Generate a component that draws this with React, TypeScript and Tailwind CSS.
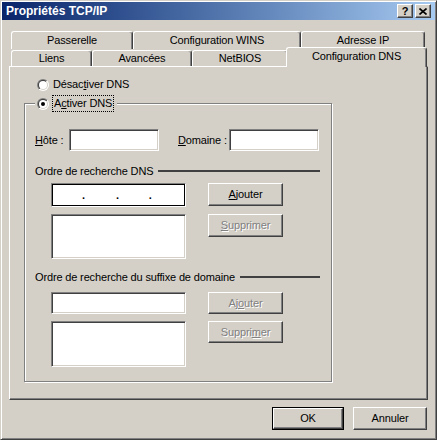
import { useId } from 'react'

const raised =
  'border border-t-white border-l-white border-r-[#404040] border-b-[#404040] shadow-[inset_-1px_-1px_0_#808080] bg-[#d4d0c8]'
const sunken =
  'border border-t-[#808080] border-l-[#808080] border-r-white border-b-white shadow-[inset_1px_1px_0_#404040,inset_-1px_-1px_0_#d4d0c8] bg-white'

function Radio({ checked }: { checked?: boolean }) {
  const id = useId().replace(/:/g, '')
  return (
    <svg width="12" height="12" viewBox="0 0 12 12" className="shrink-0">
      <defs>
        <linearGradient id={`o${id}`} x1="0" y1="0" x2="1" y2="1">
          <stop offset="0.5" stopColor="#808080" />
          <stop offset="0.5" stopColor="#ffffff" />
        </linearGradient>
        <linearGradient id={`i${id}`} x1="0" y1="0" x2="1" y2="1">
          <stop offset="0.5" stopColor="#404040" />
          <stop offset="0.5" stopColor="#d4d0c8" />
        </linearGradient>
      </defs>
      <circle cx="6" cy="6" r="6" fill={`url(#o${id})`} />
      <circle cx="6" cy="6" r="5" fill={`url(#i${id})`} />
      <circle cx="6" cy="6" r="4" fill="#fff" />
      {checked && <circle cx="6" cy="6" r="2" fill="#000" />}
    </svg>
  )
}

function Tab({ label, width }: { label: string; width: string }) {
  return (
    <div
      className={`${width} h-full flex items-center justify-center border-t border-l border-r border-t-white border-l-white border-r-[#404040] rounded-t-[3px] shadow-[inset_-1px_0_0_#808080]`}
    >
      {label}
    </div>
  )
}

function Button({ children, disabled, className = '' }: { children: React.ReactNode; disabled?: boolean; className?: string }) {
  return (
    <div
      className={`${raised} ${className} flex items-center justify-center ${
        disabled ? 'text-[#808080] [text-shadow:1px_1px_0_#fff]' : 'text-black'
      }`}
    >
      {children}
    </div>
  )
}

function SectionTitle({ text }: { text: string }) {
  return (
    <div className="flex items-center h-[14px]">
      <span className="whitespace-nowrap">{text}</span>
      <div className="flex-1 ml-[5px] mr-[1px] h-[2px] bg-[#404040]" />
    </div>
  )
}

export default function App() {
  return (
    <div className="w-[437px] h-[440px] bg-[#d4d0c8] border border-t-[#d4d0c8] border-l-[#d4d0c8] border-r-[#404040] border-b-[#404040] shadow-[inset_1px_1px_0_#fff,inset_-1px_-1px_0_#808080] p-[1px] flex flex-col text-[11px] leading-none text-black font-['Liberation_Sans',Arial,sans-serif] tracking-[-0.15px]">
      {/* title bar */}
      <div className="h-[18px] shrink-0 flex items-center pl-[4px] pr-[4px] bg-linear-to-r from-[#0a246a] to-[#a6caf0]">
        <span className="text-white font-bold text-[12px] tracking-normal">Propriétés TCP/IP</span>
        <div className="ml-auto flex gap-[2px]">
          <div className={`${raised} w-[16px] h-[14px] flex items-center justify-center`}>
            <span className="font-bold text-[11px] tracking-normal">?</span>
          </div>
          <div className={`${raised} w-[16px] h-[14px] flex items-center justify-center`}>
            <svg width="8" height="7" viewBox="0 0 8 7">
              <path d="M0.5 0.5L7.5 6.5M7.5 0.5L0.5 6.5" stroke="#000" strokeWidth="1.6" />
            </svg>
          </div>
        </div>
      </div>

      {/* body */}
      <div className="flex-1 flex flex-col px-[7px] pt-[11px]">
        {/* tabs */}
        <div className="flex ml-[2px] h-[18px]">
          <Tab label="Passerelle" width="w-[122px]" />
          <Tab label="Configuration WINS" width="w-[168px]" />
          <Tab label="Adresse IP" width="w-[124px]" />
        </div>
        <div className="flex ml-[2px] h-[17px] items-start">
          <div className="h-[17px] flex pt-[1px]">
            <Tab label="Liens" width="w-[81px]" />
          </div>
          <div className="h-[17px] flex pt-[1px]">
            <Tab label="Avancées" width="w-[100px]" />
          </div>
          <div className="h-[17px] flex pt-[1px]">
            <Tab label="NetBIOS" width="w-[96px]" />
          </div>
          <div className="relative z-10 -ml-[2px] -mt-[2px] w-[141px] h-[20px] pb-[2px] bg-[#d4d0c8] flex items-center justify-center border-t border-l border-r border-t-white border-l-white border-r-[#404040] rounded-t-[3px] shadow-[inset_-1px_0_0_#808080]">
            Configuration DNS
          </div>
        </div>

        {/* panel */}
        <div className="h-[334px] border border-t-white border-l-white border-r-[#404040] border-b-[#404040] shadow-[inset_-1px_-1px_0_#808080] pl-[14px] pt-[9px] flex flex-col">
          <div className="h-[17px] flex items-center pl-[13px]">
            <Radio />
            <span className="ml-[4px]">
              Désac<u className="underline-offset-[1px]">t</u>iver DNS
            </span>
          </div>

          <fieldset className="mt-[2px] w-[308px] border border-[#808080] shadow-[inset_1px_1px_0_#fff,1px_1px_0_#fff] px-[10px] pb-[14px]">
            <legend className="px-[2px] bg-[#d4d0c8] h-[17px]">
              <div className="flex items-center h-[17px] pr-[1px]">
                <Radio checked />
                <span className="ml-[3px] h-[17px] flex items-center px-[1px] border border-dotted border-black">
                  A<u className="underline-offset-[1px]">c</u>tiver DNS
                </span>
              </div>
            </legend>

            <div className="flex items-center h-[22px] mt-[17px]">
              <span className="w-[34px]">
                <u className="underline-offset-[1px]">H</u>ôte :
              </span>
              <div className={`${sunken} w-[90px] h-[22px]`} />
              <span className="w-[51px] ml-[19px]">
                <u className="underline-offset-[1px]">D</u>omaine :
              </span>
              <div className={`${sunken} w-[90px] h-[22px]`} />
            </div>

            <div className="mt-[13px]">
              <SectionTitle text="Ordre de recherche DNS" />
            </div>

            <div className="flex mt-[5px] pl-[16px]">
              <div className="flex flex-col w-[135px]">
                <div className="h-[24px] border border-t-[#808080] border-l-[#808080] border-r-white border-b-white shadow-[inset_0_0_0_1px_#000] bg-white flex items-center font-bold">
                  <span className="ml-[30px]">.</span>
                  <span className="ml-[31px]">.</span>
                  <span className="ml-[30px]">.</span>
                </div>
                <div className={`${sunken} mt-[7px] h-[45px]`} />
              </div>
              <div className="flex flex-col ml-[22px]">
                <Button className="w-[75px] h-[23px]">
                  <span>
                    <u className="underline-offset-[1px]">A</u>jouter
                  </span>
                </Button>
                <Button disabled className="w-[75px] h-[23px] mt-[8px]">
                  <span>
                    <u className="underline-offset-[1px]">S</u>upprimer
                  </span>
                </Button>
              </div>
            </div>

            <div className="mt-[11px]">
              <SectionTitle text="Ordre de recherche du suffixe de domaine" />
            </div>

            <div className="flex mt-[8px] pl-[16px]">
              <div className="flex flex-col w-[135px]">
                <div className={`${sunken} h-[22px]`} />
                <div className={`${sunken} mt-[7px] h-[46px]`} />
              </div>
              <div className="flex flex-col ml-[22px]">
                <Button disabled className="w-[75px] h-[22px]">
                  <span>
                    Aj<u className="underline-offset-[1px]">o</u>uter
                  </span>
                </Button>
                <Button disabled className="w-[75px] h-[22px] mt-[7px]">
                  <span>
                    Suppri<u className="underline-offset-[1px]">m</u>er
                  </span>
                </Button>
              </div>
            </div>
          </fieldset>
        </div>

        {/* dialog buttons */}
        <div className="flex justify-end gap-[9px] mt-[7px] pr-[1px]">
          <div className="w-[72px] h-[23px] border border-black flex">
            <Button className="flex-1">OK</Button>
          </div>
          <Button className="w-[74px] h-[23px]">Annuler</Button>
        </div>
      </div>
    </div>
  )
}
